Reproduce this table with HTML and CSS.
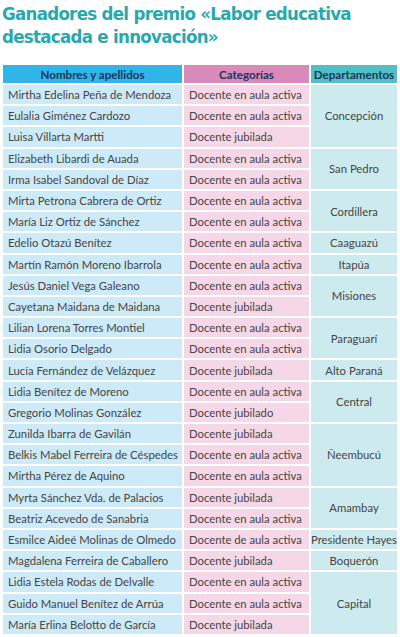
FILE: index.html
```html
<!DOCTYPE html>
<html lang="es">
<head>
<meta charset="utf-8">
<link rel="stylesheet" href="styles.css">
</head>
<body>
<h1 class="title">Ganadores del premio «Labor educativa<br>destacada e innovación»</h1>
<table class="awards">
  <thead>
    <tr>
      <th class="c-name">Nombres y apellidos</th>
      <th class="c-cat">Categorías</th>
      <th class="c-dep">Departamentos</th>
    </tr>
  </thead>
  <tbody>
    <tr><td class="c-name">Mirtha Edelina Peña de Mendoza</td><td class="c-cat">Docente en aula activa</td><td class="c-dep" rowspan="3">Concepción</td></tr>
    <tr><td class="c-name">Eulalia Giménez Cardozo</td><td class="c-cat">Docente en aula activa</td></tr>
    <tr><td class="c-name">Luisa Villarta Martti</td><td class="c-cat">Docente jubilada</td></tr>
    <tr><td class="c-name">Elizabeth Libardi de Auada</td><td class="c-cat">Docente en aula activa</td><td class="c-dep" rowspan="2">San Pedro</td></tr>
    <tr><td class="c-name">Irma Isabel Sandoval de Díaz</td><td class="c-cat">Docente en aula activa</td></tr>
    <tr><td class="c-name">Mirta Petrona Cabrera de Ortiz</td><td class="c-cat">Docente en aula activa</td><td class="c-dep" rowspan="2">Cordillera</td></tr>
    <tr><td class="c-name">María Liz Ortiz de Sánchez</td><td class="c-cat">Docente en aula activa</td></tr>
    <tr><td class="c-name">Edelio Otazú Benítez</td><td class="c-cat">Docente en aula activa</td><td class="c-dep">Caaguazú</td></tr>
    <tr><td class="c-name">Martín Ramón Moreno Ibarrola</td><td class="c-cat">Docente en aula activa</td><td class="c-dep">Itapúa</td></tr>
    <tr><td class="c-name">Jesús Daniel Vega Galeano</td><td class="c-cat">Docente en aula activa</td><td class="c-dep" rowspan="2">Misiones</td></tr>
    <tr><td class="c-name">Cayetana Maidana de Maidana</td><td class="c-cat">Docente jubilada</td></tr>
    <tr><td class="c-name">Lilian Lorena Torres Montiel</td><td class="c-cat">Docente en aula activa</td><td class="c-dep" rowspan="2">Paraguarí</td></tr>
    <tr><td class="c-name">Lidia Osorio Delgado</td><td class="c-cat">Docente en aula activa</td></tr>
    <tr><td class="c-name">Lucía Fernández de Velázquez</td><td class="c-cat">Docente jubilada</td><td class="c-dep">Alto Paraná</td></tr>
    <tr><td class="c-name">Lidia Benítez de Moreno</td><td class="c-cat">Docente en aula activa</td><td class="c-dep" rowspan="2">Central</td></tr>
    <tr><td class="c-name">Gregorio Molinas González</td><td class="c-cat">Docente jubilado</td></tr>
    <tr><td class="c-name">Zunilda Ibarra de Gavilán</td><td class="c-cat">Docente jubilada</td><td class="c-dep" rowspan="3">Ñeembucú</td></tr>
    <tr><td class="c-name">Belkis Mabel Ferreira de Céspedes</td><td class="c-cat">Docente en aula activa</td></tr>
    <tr><td class="c-name">Mirtha Pérez de Aquino</td><td class="c-cat">Docente en aula activa</td></tr>
    <tr><td class="c-name">Myrta Sánchez Vda. de Palacios</td><td class="c-cat">Docente jubilada</td><td class="c-dep" rowspan="2">Amambay</td></tr>
    <tr><td class="c-name">Beatriz Acevedo de Sanabria</td><td class="c-cat">Docente en aula activa</td></tr>
    <tr><td class="c-name">Esmilce Aideé Molinas de Olmedo</td><td class="c-cat">Docente de aula activa</td><td class="c-dep">Presidente Hayes</td></tr>
    <tr><td class="c-name">Magdalena Ferreira de Caballero</td><td class="c-cat">Docente jubilada</td><td class="c-dep">Boquerón</td></tr>
    <tr><td class="c-name">Lidia Estela Rodas de Delvalle</td><td class="c-cat">Docente en aula activa</td><td class="c-dep" rowspan="3">Capital</td></tr>
    <tr><td class="c-name">Guido Manuel Benítez de Arrúa</td><td class="c-cat">Docente en aula activa</td></tr>
    <tr><td class="c-name">María Erlina Belotto de García</td><td class="c-cat">Docente jubilada</td></tr>
  </tbody>
</table>
</body>
</html>
```
FILE: styles.css
```css
html, body {
  margin: 0;
  padding: 0;
  background: #ffffff;
}

body {
  font-family: Lato, "Open Sans", sans-serif;
  width: 400px;
  overflow: hidden;
}

.title {
  margin: 0;
  padding: 2px 0 0 2px;
  font-family: "DejaVu Sans Condensed", "DejaVu Sans", sans-serif;
  font-weight: bold;
  font-size: 18.5px;
  line-height: 23px;
  letter-spacing: -0.7px;
  color: #27a9ae;
  white-space: nowrap;
}

.awards {
  margin: 15px 0 0 1px;
  width: 398px;
  border-collapse: separate;
  border-spacing: 2px;
  table-layout: fixed;
  font-size: 11.3px;
}

.awards th {
  height: 18px;
  padding: 0;
  font-weight: bold;
  font-size: 11.6px;
  color: #1d3559;
  text-align: center;
  white-space: nowrap;
}

.awards td {
  height: 19.2px;
  padding: 0 0 0 5px;
  color: #454545;
  white-space: nowrap;
  overflow: hidden;
}

.awards th.c-name { width: 179px; background: #2fb5e8; }
.awards th.c-cat { width: 125px; background: #d88abb; }
.awards th.c-dep { background: #50bfc6; }

.awards td.c-name { background: #cdeaf8; }
.awards td.c-cat { background: #f6d7e8; }
.awards td.c-dep {
  background: #cdebef;
  text-align: center;
  padding: 0;
}
```
